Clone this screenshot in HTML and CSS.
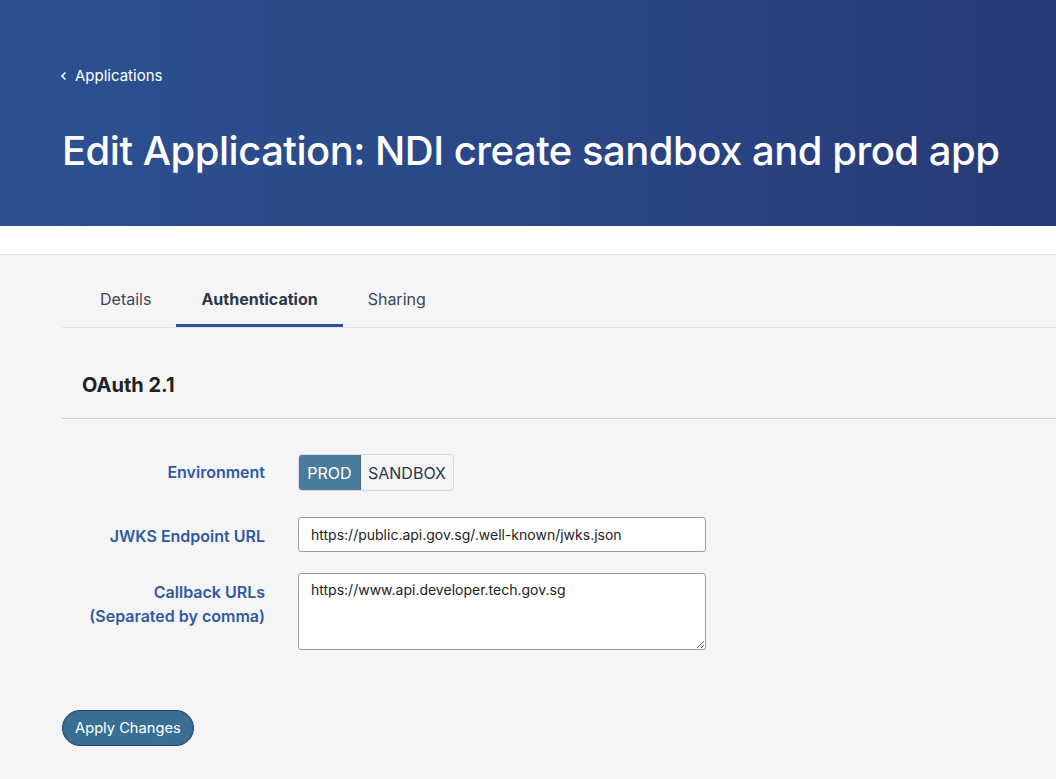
FILE: index.html
```html
<!DOCTYPE html>
<html>
<head>
<meta charset="utf-8">
<link rel="stylesheet" href="styles.css">
</head>
<body>
<header class="hero">
  <a class="back" href="#"><svg width="8" height="10" viewBox="0 0 8 10"><path d="M5.5 1.5 L2 5 L5.5 8.5" fill="none" stroke="#fff" stroke-width="1.6"/></svg>Applications</a>
  <h1>Edit Application: NDI create sandbox and prod app</h1>
</header>
<div class="strip"></div>
<main class="content">
  <nav class="tabs">
    <span class="tab">Details</span>
    <span class="tab active">Authentication</span>
    <span class="tab">Sharing</span>
  </nav>
  <h2 class="section-title">OAuth 2.1</h2>
  <form class="form">
    <div class="row">
      <label class="label">Environment</label>
      <div class="toggle"><span class="opt on">PROD</span><span class="opt">SANDBOX</span></div>
    </div>
    <div class="row">
      <label class="label">JWKS Endpoint URL</label>
      <input class="input" type="text" value="https://public.api.gov.sg/.well-known/jwks.json">
    </div>
    <div class="row">
      <label class="label">Callback URLs<br>(Separated by comma)</label>
      <textarea class="textarea">https://www.api.developer.tech.gov.sg</textarea>
    </div>
  </form>
  <button class="apply">Apply Changes</button>
</main>
</body>
</html>
```
FILE: styles.css
```css
* { box-sizing: border-box; }
html, body { margin: 0; padding: 0; }
body {
  font-family: Inter, "Noto Sans", sans-serif;
  background: #f5f5f7;
  color: #2d3748;
  width: 1056px;
  overflow: hidden;
}
.hero {
  height: 226px;
  background: linear-gradient(90deg, #2c5191 0%, #2a4786 50%, #273a77 100%);
  padding: 65px 20px 0 60px;
  color: #fff;
}
.back {
  display: inline-flex;
  align-items: center;
  gap: 7px;
  color: #fff;
  text-decoration: none;
  font-size: 15px;
  line-height: 20px;
}
.hero h1 {
  margin: 40px 0 0 2px;
  font-size: 40px;
  font-weight: 500;
  line-height: 50px;
  letter-spacing: -0.5px;
  white-space: nowrap;
}
.strip {
  height: 29px;
  background: #fff;
  border-bottom: 1px solid #e0e0e3;
}
.content {
  padding: 0 0 0 62px;
}
.tabs {
  display: flex;
  padding-left: 13px;
  border-bottom: 1px solid #e3e3e8;
  height: 73px;
  align-items: stretch;
}
.tab {
  display: flex;
  align-items: center;
  padding: 18px 25px 0 25px;
  font-size: 16px;
  color: #3d4658;
  border-bottom: 3px solid transparent;
}
.active {
  font-weight: 700;
  color: #2d3748;
  border-bottom-color: #2c4e94;
}
.section-title {
  margin: 0;
  padding: 45px 0 0 20px;
  height: 91px;
  font-size: 20px;
  font-weight: 700;
  color: #222;
  border-bottom: 1px solid #cfcfd4;
}
.form {
  padding-top: 35px;
  display: flex;
  flex-direction: column;
  gap: 26px;
}
.form .row:nth-child(3) { margin-top: -5px; }
.row {
  display: flex;
  align-items: flex-start;
  gap: 33px;
}
.label {
  width: 203px;
  text-align: right;
  font-size: 16px;
  font-weight: 600;
  color: #2f5aa0;
  line-height: 24px;
  padding-top: 6px;
}
.row + .row .label { padding-top: 7px; }
.toggle {
  display: flex;
  height: 37px;
  border: 1px solid #d8d8de;
  border-radius: 4px;
  overflow: hidden;
  background: #f5f5f7;
}
.opt {
  display: flex;
  align-items: center;
  padding: 0 7px;
  font-size: 16px;
  color: #2d3748;
}
.opt.on {
  background: #4a7a9c;
  color: #fff;
  width: 62px;
  justify-content: center;
  border-right: 1px solid #3e6a8a;
}
.input, .textarea {
  width: 408px;
  font-family: Inter, "Noto Sans", sans-serif;
  font-size: 14px;
  color: #222;
  background: #fff;
  border: 1px solid #9a9aa0;
  border-radius: 3px;
  padding: 0 12px;
}
.input { height: 35px; }
.textarea {
  height: 77px;
  padding: 7px 12px;
  resize: vertical;
  line-height: 18px;
}
.apply {
  margin-top: 60px;
  height: 36px;
  padding: 0 12px;
  border-radius: 18px;
  background: #3a6f94;
  border: 1px solid #1f3f5c;
  color: #fff;
  font-family: Inter, "Noto Sans", sans-serif;
  font-size: 14.7px;
}
```
